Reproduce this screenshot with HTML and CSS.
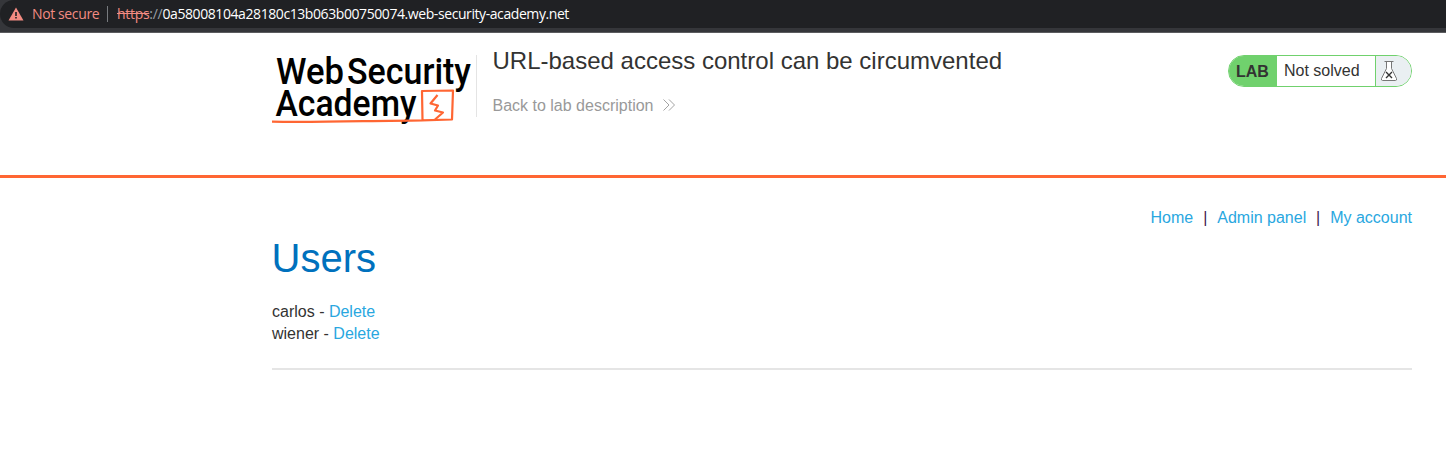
FILE: index.html
```html
<!DOCTYPE html>
<html lang="en">
<head>
<meta charset="utf-8">
<title>URL-based access control can be circumvented</title>
<link rel="stylesheet" href="styles.css">
</head>
<body>
<div class="toolbar">
  <div class="address">
    <svg class="warn" width="16" height="14" viewBox="0 0 16 14"><path d="M8 .5 15.500 13.500H.5z" fill="#f28b82"/><path d="M7.200 5h1.600v4H7.200zM7.200 10h1.600v1.600H7.200z" fill="#202124"/></svg>
    <span class="insecure">Not secure</span>
    <span class="bar"></span>
    <span class="scheme"><s>https</s><i>:</i><b>//</b></span><span class="host">0a58008104a28180c13b063b00750074.web-security-academy.net</span>
  </div>
</div>
<header class="lab-header">
  <div class="container head-row">
    <svg class="logo" width="204" height="76" viewBox="0 0 204 76">
      <g class="logo-text">
        <text x="4" y="34.500" textLength="68" lengthAdjust="spacingAndGlyphs">Web</text>
        <text x="75" y="34.500" textLength="124" lengthAdjust="spacingAndGlyphs">Security</text>
        <text x="3.500" y="67" textLength="141" lengthAdjust="spacingAndGlyphs">Academy</text>
      </g>
      <g fill="none" stroke="#ff6633" stroke-width="2.200" stroke-linejoin="round">
        <path d="M0 72.700C40 73.800 90 71.900 150.500 71.300L150 42 181 41.500 180 70.500 150 71.300"/>
        <path d="M165.500 46 158.500 54.500 166 56.500 163 61.500 171 63.500 163 70.500"/>
      </g>
    </svg>
    <div class="title">
      <h2>URL-based access control can be circumvented</h2>
      <a class="back">Back to lab description <svg width="14" height="12" viewBox="0 0 14 12"><path d="M1.500.5 7 6 1.500 11.500M7 .5 12.500 6 7 11.500" fill="none" stroke="#999" stroke-width=".9"/></svg></a>
    </div>
    <div class="status">
      <strong>LAB</strong><span>Not solved</span>
      <div class="flask"><svg width="18" height="22" viewBox="0 0 18 22"><path d="M4.500 1.500h9M6.500 1.500v7L1.500 18.500q-.5 2 1 2h13q1.500 0 1-2l-5-10v-7" fill="#fff" stroke="#777" stroke-width="1"/><path d="m6 12 6 6M12 12l-6 6" stroke="#333" stroke-width="1.400"/></svg></div>
    </div>
  </div>
</header>
<main class="container">
  <nav><a>Home</a><span class="divider">|</span><a>Admin panel</a><span class="divider">|</span><a>My account</a></nav>
  <h1>Users</h1>
  <div class="user">carlos - <a>Delete</a></div>
  <div class="user">wiener - <a>Delete</a></div>
  <hr>
</main>
</body>
</html>
```
FILE: styles.css
```css
* { box-sizing: border-box; }
body { margin: 0; background: #fff; color: #333332; font: 16px/22px "Liberation Sans", Arial, sans-serif; }
.toolbar { height: 33px; background: #35363a; border-bottom: 1px solid #5b5c5f; }
.address { display: flex; align-items: center; height: 28px; padding-left: 8px; background: #202124; border-radius: 14px 0 0 14px; font: 14px/28px "Open Sans", "Noto Sans", sans-serif; white-space: nowrap; }
.insecure { width: 75px; margin-left: 8px; color: #f28b82; letter-spacing: -.38px; }
.bar { width: 1px; height: 16px; margin-right: 9px; background: #777a7e; }
.scheme { width: 45.5px; color: #f28b82; letter-spacing: -.3px; }
.scheme i, .scheme b { color: #9aa0a6; font-style: normal; font-weight: 400; }
.host { color: #fff; letter-spacing: -.42px; }
.container { width: 1140px; margin-left: 272px; }
.lab-header { height: 145px; border-bottom: 3px solid #ff6633; }
.head-row { display: flex; align-items: flex-start; padding-top: 16px; }
.logo { flex: none; overflow: visible; }
.logo-text { font: 500 36.5px Roboto, sans-serif; fill: #000; }
.title { height: 62px; margin-top: 6px; padding-left: 15.5px; border-left: 1px solid #e4e4e4; }
h2 { margin: -8px 0 0; font-size: 24px; font-weight: 400; line-height: 28px; }
.back { display: block; margin-top: 20px; color: #999; }
.back svg { margin-left: 4px; }
.status { display: flex; width: 184px; height: 32px; margin: 6px 0 0 auto; overflow: hidden; border: 1px solid #70d16d; border-radius: 16px; line-height: 30px; }
.status strong { width: 48px; padding: 1px 0 0 7px; background: #70d16d; }
.status span { width: 98px; padding-left: 7px; }
.flask { flex: 1; padding: 4px 0 0 4px; background: #eaeff2; border-left: 1px solid #70d16d; line-height: 0; }
nav { display: flex; justify-content: flex-end; padding-top: 29px; }
a { color: #29a7df; }
.divider { width: 24px; text-align: center; color: #402050; }
h1 { margin: 5px 0 19px -.5px; color: #0071bd; font-size: 40px; font-weight: 400; line-height: 48px; }
hr { height: 2px; margin: 23px 0 0; border: 0; background: #e5e5e5; }
```
